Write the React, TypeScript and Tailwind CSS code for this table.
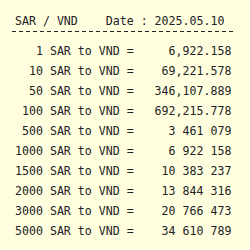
import React from "react";

const rows: [string, string][] = [
  ["1", "6,922.158"],
  ["10", "69,221.578"],
  ["50", "346,107.889"],
  ["100", "692,215.778"],
  ["500", "3 461 079"],
  ["1000", "6 922 158"],
  ["1500", "10 383 237"],
  ["2000", "13 844 316"],
  ["3000", "20 766 473"],
  ["5000", "34 610 789"],
];

export default function App() {
  return (
    <div
      className="w-[250px] h-[250px] overflow-hidden bg-[#ffffe0] text-[#222222] text-[11.6px] whitespace-pre pt-[11px]"
      style={{ fontFamily: '"DejaVu Sans Mono", monospace' }}
    >
      <div className="leading-[20px] pl-[15px]">{"SAR / VND    Date : 2025.05.10"}</div>
      <div className="ml-[12px] w-[221px] h-[1px] bg-[repeating-linear-gradient(to_right,#222222_0px,#222222_4px,transparent_4px,transparent_7px)]" />
      <div className="mt-[9px] flex flex-col">
        {rows.map(([a, v]) => (
          <div key={a} className="leading-[20px] pl-[15px]">
            {a.padStart(4, " ") + " SAR to VND = " + v.padStart(13, " ")}
          </div>
        ))}
      </div>
    </div>
  );
}
